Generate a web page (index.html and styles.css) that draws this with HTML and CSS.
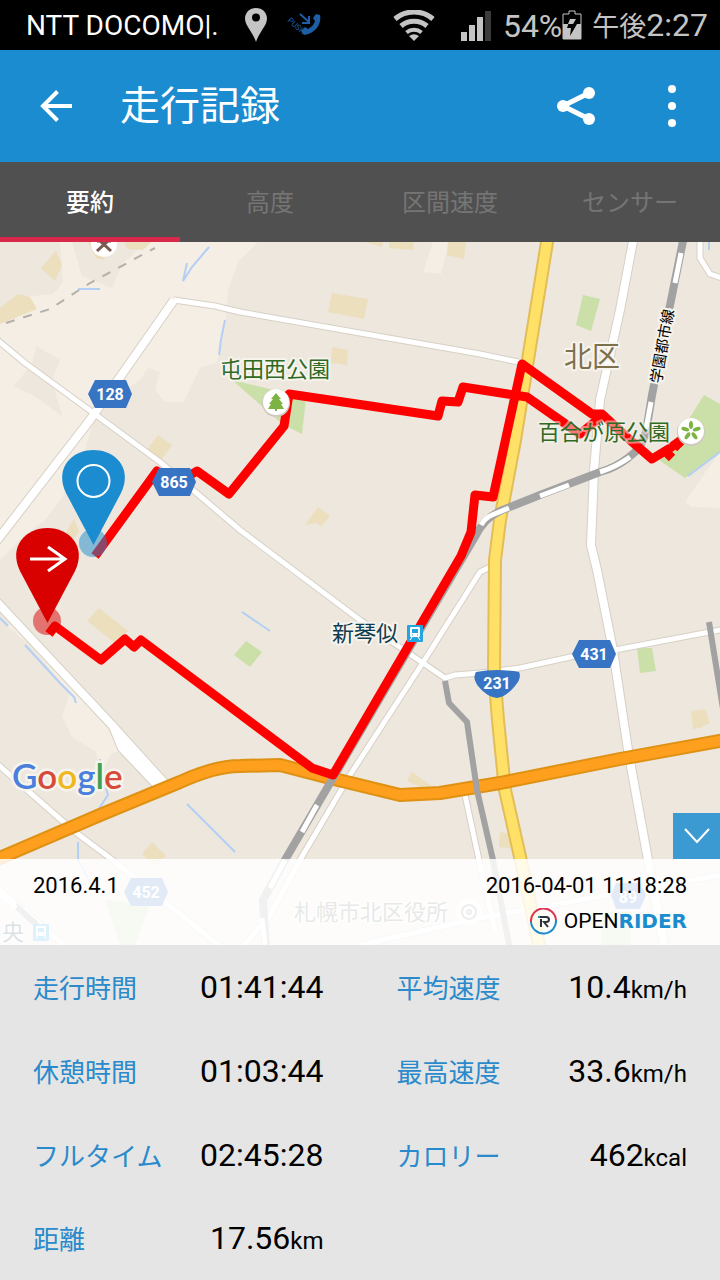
FILE: index.html
```html
<!DOCTYPE html>
<html lang="ja">
<head>
    <meta charset="UTF-8">
    <meta name="viewport" content="width=device-width, initial-scale=1.0">
    <title>走行記録 - OpenRider</title>
    <link rel="stylesheet" href="styles.css">
</head>
<body>
    <div class="status-bar">
        <span class="carrier">NTT DOCOMO|.</span>
        <svg class="status-pin" width="22" height="34" viewBox="0 0 22 34">
            <path fill="#c4c4c4" fill-rule="evenodd" d="M11 0C4.500 0 0 4.700 0 10.500 0 18 8 24 11 34 14 24 22 18 22 10.500 22 4.700 17.500 0 11 0zM11 5.500a4 4 0 1 1 0 8a4 4 0 1 1 0-8z"/>
        </svg>
        <svg class="status-call" width="34" height="24" viewBox="0 0 34 24">
            <text class="push" x="0" y="8" transform="rotate(42 0 8)">PUSH</text>
            <path d="M13 1l9 8M22 3v7h-7" fill="none" stroke="#1d5ea6" stroke-width="2"/>
            <path d="M29 1l4 1c2 9-5 19-16 20l-3-4 4-4 3 2c4-2 6-5 7-8l-2-3z" fill="#1d5ea6"/>
        </svg>
        <div class="status-right">
            <svg width="42" height="31" viewBox="0 0 42 31" fill="none" stroke="#c4c4c4" stroke-width="5">
                <path d="M2 9a29 29 0 0 1 38 0"/>
                <path d="M8 16a20 20 0 0 1 26 0"/>
                <path d="M13.500 22.500a12 12 0 0 1 15 0" stroke-width="4"/>
                <path d="M21 31l-5-5a8.500 8.500 0 0 1 10 0z" fill="#c4c4c4" stroke="none"/>
            </svg>
            <svg class="signal" width="30" height="31" viewBox="0 0 30 31" fill="#c4c4c4">
                <path d="M0 22h6v9H0zM8 15h6v16H8zM16 7h6v24h-6z"/>
                <path fill="#3c3c3c" d="M24 1h6v30h-6z"/>
            </svg>
            <span class="battery-level">54%</span>
            <svg width="20" height="30" viewBox="0 0 20 30">
                <path d="M1 4h6V1h6v3h6v25H1z" fill="none" stroke="#c4c4c4" stroke-width="1"/>
                <path d="M1 14h18v15H1z" fill="#c4c4c4"/>
                <path d="M8 9h6l-3 5h4L8 26l1-8H5z" fill="#000"/>
                <path d="M8 9h6l-3 5H6z" fill="#c4c4c4"/>
            </svg>
            <span class="clock"><span class="ampm">午後</span>2:27</span>
        </div>
    </div>

    <header class="app-bar">
        <button class="icon-btn" type="button" aria-label="戻る">
            <svg width="32" height="32" viewBox="0 0 32 32" fill="none" stroke="#fff" stroke-width="4">
                <path d="M32 16H3M17.500 1.500L3 16l14.500 14.500"/>
            </svg>
        </button>
        <h1>走行記録</h1>
        <button class="icon-btn" type="button" aria-label="共有">
            <svg width="38" height="38" viewBox="0 0 38 38" fill="#fff">
                <path d="M32 6L6 19l26 13" fill="none" stroke="#fff" stroke-width="5"/>
                <circle cx="6" cy="19" r="6"/>
                <circle cx="32" cy="6" r="6"/>
                <circle cx="32" cy="32" r="6"/>
            </svg>
        </button>
        <button class="icon-btn menu-btn" type="button" aria-label="メニュー">
            <svg width="16" height="42" viewBox="0 0 16 42" fill="#fff">
                <circle cx="8" cy="4" r="4"/>
                <circle cx="8" cy="21" r="4"/>
                <circle cx="8" cy="38" r="4"/>
            </svg>
        </button>
    </header>

    <nav class="tabs">
        <a href="#summary" class="active">要約</a>
        <a href="#altitude">高度</a>
        <a href="#split">区間速度</a>
        <a href="#sensor">センサー</a>
    </nav>

    <section class="map">
        <svg class="map-canvas" viewBox="0 242 720 703">
            <rect class="land" x="0" y="242" width="720" height="703"/>

            <!-- lighter open ground -->
            <g class="field">
                <path d="M0 242H258L238 262 228 290 225 330 217 362 200 368 187 395 183 402 165 402 155 390 160 372 148 368 140 380 110 400 95 415 85 450 78 470 60 500 45 520 25 535 0 560z"/>
                <path d="M433 242h16l-8 32-18-2z"/>
                <path d="M720 452l-20 28-15 22 6 5 29 1z"/>
                <path d="M5 625l25 20 40 48-8 24 10 20 24 15 5 22 10-20 15-5-20-25-35-50-50-50z"/>
            </g>
            <g class="land">
                <path d="M0 242h60l3 40-10 12-30 3-23 20z"/>
                <path d="M72 242h75l-25 22-10 24-30-12z"/>
                <path d="M36 346l24 14-8 20 10 36-28-20-20-10 18-22z"/>
            </g>
            <g class="block">
                <path d="M56 251l6 14-7 16-14-13zM18 294l12 3 7 12-37 15v-16zM88 242h20l-4 18-8-2zM125 242h26l-8 8-16-1z"/>
                <path d="M332 293l36 6-4 20-36-7zM332 347l16 3-1 15-16-2z"/>
                <path d="M365 242h18l-1 5zM389 242h25l-1 8-24-2zM448 242h18l-2 17-17-4z"/>
                <path d="M158 435l14 10-12 16-14-10zM74 519l5 12-8 12-6-9z"/>
                <path d="M318 507l12 9-9 11-4-4-12 2z"/>
                <path d="M99 608l29 23-13 12-28-22z"/>
                <path d="M412 772l20 14-12 1-13-6zM691 711l14-2 5 14-10 5-7 1z"/>
                <path d="M152 842l14 14-12 10-12-12zM500 832l12 2 3 15-16-2z"/>
            </g>
            <g class="park">
                <path d="M232 380l74 18-4 36-20-10z"/>
                <path d="M583 295l17 4-9 32-15-6z"/>
                <path d="M704 395l16 9v48l-35 26-26-18 20-25z"/>
                <path d="M246 641l16 11-12 15-16-12z"/>
                <path d="M637 648h15l4 23-16 2z"/>
                <path d="M105 900l45 5-15 40h-15z"/>
                <path d="M603 912h26l2 33h-30z"/>
            </g>
            <g class="water">
                <path d="M209 247l-17 20-9 14 4-18M78 289h22M225 320l-4 20-2 15"/>
                <path d="M0 618l8 8M25 645l35 38 14 14 2 6M187 804l48 48M242 612l28 19"/>
                <path d="M100 759v8l8 28-12 18M78 842v18l14 25M720 452l-32 24M709 242v8"/>
            </g>
            <path class="border-line" d="M6 323L50 309 90 283 155 248"/>

            <g class="road-casing">
                <path class="wide" d="M-5 543L90 420 174 300M-5 600L110 723 168 787M112 724l10 24 36 38"/>
                <path class="wide" d="M634 236L620 310 600 400 594 470 591 545 597 570 613 650 628 750 648 860 665 950"/>
                <path d="M174 300L215 306 240 312 480 354 528 364"/>
                <path d="M-5 338L25 363 92 412 160 462 240 530 360 620 445 678 455 675 480 673 520 668 575 656 620 649 725 629"/>
                <path d="M-5 762L75 832 110 858 225 950M494 565L480 572 422 664 350 775 300 860 270 915 240 950"/>
                <path d="M700 236v22l10 16 15 5M465 795l14 65 16 70M360 945l120-27 240-43M-5 886L70 950"/>
            </g>
            <g class="road">
                <path class="wide" d="M-5 543L90 420 174 300M-5 600L110 723 168 787M112 724l10 24 36 38"/>
                <path class="wide" d="M634 236L620 310 600 400 594 470 591 545 597 570 613 650 628 750 648 860 665 950"/>
                <path d="M174 300L215 306 240 312 480 354 528 364"/>
                <path d="M-5 338L25 363 92 412 160 462 240 530 360 620 445 678 455 675 480 673 520 668 575 656 620 649 725 629"/>
                <path d="M-5 762L75 832 110 858 225 950M494 565L480 572 422 664 350 775 300 860 270 915 240 950"/>
                <path d="M700 236v22l10 16 15 5M465 795l14 65 16 70M360 945l120-27 240-43M-5 886L70 950"/>
            </g>

            <path class="route-casing" d="M548 236L515 440 500 520 495 560 494 670 498 720 505 790 523 870 540 950"/>
            <path class="route-road" d="M548 236L515 440 500 520 495 560 494 670 498 720 505 790 523 870 540 950"/>
            <path class="highway-casing" d="M-5 860L100 815 180 782Q215 766 240 766L280 765 330 778 400 795 440 793 500 783 620 759 725 740"/>
            <path class="highway" d="M-5 860L100 815 180 782Q215 766 240 766L280 765 330 778 400 795 440 793 500 783 620 759 725 740"/>

            <!-- railways -->
            <path class="rail" d="M684 236L663 340 652 395 646 432Q642 448 628 458 615 468 600 472L540 495 500 511Q484 519 476 535L420 630 333 778 285 860 263 900 266 950"/>
            <path class="rail thin" d="M445 681L449 703 467 722 477 790 493 860 510 950M709 622L724 715M15 905l22 20"/>
            <path class="rail-dash" d="M681 253L675 283M651 402L646 429M630 457Q616 467 600 472M569 485L540 496M509 508L492 515Q485 518 481 525M317 805L302 832M285 860L270 888M262 918L265 945M0 893L16 908"/>

            <path class="track" d="M95 556L157 471 177 483 197 471 229 494 284 426 289 394 438 416 442 401 458 402 463 387 527 397 580 434 602 416M49 634L55 626 101 660 125 639 134 647 141 640 312 768 333 775 461 556 471 532 475 495 493 497 522 364 592 414 602 414 630 440 652 459 670 448 687 436M664 450l8 8M674 448l12-12"/>

            <g class="shield">
                <path d="M88 394l7-14h31l6 14-6 14H95zM152 482l7-14h31l6 14-6 14h-31zM572 654l7-14h31l6 14-6 14h-31zM124 892l7-14h31l6 14-6 14h-31z"/>
                <path d="M476 672q20-4 43 0 3 6-4 14-9 11-18 12-10-1-19-12-6-8-2-14z"/>
                <path d="M616 883h24l6 12-6 14h-24l-5-14z"/>
                <text x="110" y="400">128</text>
                <text x="174" y="488">865</text>
                <text x="594" y="660">431</text>
                <text x="497" y="689">231</text>
                <text x="146" y="898">452</text>
                <text x="628" y="903">89</text>
            </g>

            <!-- place markers -->
            <circle cx="104" cy="244" r="13" fill="#fff"/>
            <path d="M97 241h14M109 240l-12 11M99 240l12 11" fill="none" stroke="#7a5a50" stroke-width="3"/>
            <circle cx="276" cy="403" r="14" fill="#cfcac0"/>
            <circle cx="276" cy="402" r="13" fill="#fff"/>
            <path d="M276 393l5 6h-2l4 5h-2l3 5h-7v2h-2v-2h-7l3-5h-2l4-5h-2z" fill="#7cb342"/>
            <circle cx="691" cy="432" r="14" fill="#cfcac0"/>
            <circle cx="691" cy="431" r="13" fill="#fff"/>
            <g fill="#7cb342">
                <ellipse cx="691" cy="425" rx="2" ry="4"/>
                <ellipse cx="691" cy="425" rx="2" ry="4" transform="rotate(72 691 431)"/>
                <ellipse cx="691" cy="425" rx="2" ry="4" transform="rotate(144 691 431)"/>
                <ellipse cx="691" cy="425" rx="2" ry="4" transform="rotate(216 691 431)"/>
                <ellipse cx="691" cy="425" rx="2" ry="4" transform="rotate(288 691 431)"/>
            </g>
            <circle cx="469" cy="912" r="13" fill="#fff"/>
            <g fill="none" stroke="#8a8a8a" stroke-width="2">
                <circle cx="469" cy="912" r="7"/>
                <circle cx="469" cy="912" r="2"/>
            </g>
            <g id="station">
                <rect x="407" y="625" width="16" height="17" rx="1" fill="#25a5e0"/>
                <rect x="410" y="627" width="10" height="10" rx="1" fill="#fff"/>
                <rect x="412" y="629" width="6" height="4" fill="#25a5e0"/>
                <path d="M412 637l-2 3M418 637l2 3" fill="none" stroke="#fff"/>
                <path d="M412 635h1M417 635h1" fill="none" stroke="#25a5e0"/>
            </g>
            <use href="#station" x="-374" y="299"/>

            <g class="place">
                <text class="park-name" x="220" y="377">屯田西公園</text>
                <text class="park-name over-track" x="538" y="440">百合が原公園</text>
                <text class="ward" x="564" y="367">北区</text>
                <text class="station-name" x="332" y="641">新琴似</text>
                <text class="station-name" x="-20" y="940">中央</text>
                <text class="office" x="294" y="920">札幌市北区役所</text>
                <text class="line-name" x="661" y="384" transform="rotate(-80 661 384)">学園都市線</text>
            </g>
            <text class="google" x="12" y="789"><tspan fill="#4a80dc">G</tspan><tspan fill="#d64a3a">o</tspan><tspan fill="#efb81f">o</tspan><tspan fill="#4a80dc">g</tspan><tspan fill="#3da057">l</tspan><tspan fill="#d64a3a">e</tspan></text>

            <!-- start and goal pins -->
            <circle cx="93" cy="543" r="14" fill="#1b8cd0" fill-opacity=".5"/>
            <path d="M93.500 545L66 493C54 468 72 450 93.500 450S133 468 121 493z" fill="#1b8cd0"/>
            <circle cx="93.500" cy="481" r="16" fill="none" stroke="#fff" stroke-width="2"/>
            <circle cx="47" cy="621" r="14" fill="#d90000" fill-opacity=".5"/>
            <path d="M47.500 623L20 571C8 546 26 528 47.500 528S87 546 75 571z" fill="#d90000"/>
            <path d="M30 559h34M48 547l17 12-17 12" fill="none" stroke="#fff" stroke-width="3"/>
        </svg>

        <div class="map-footer">
            <button class="collapse-btn" type="button" aria-label="地図を広げる">
                <svg width="26" height="16" viewBox="0 0 26 16" fill="none" stroke="#fff" stroke-width="2">
                    <path d="M1 1l12 13L25 1"/>
                </svg>
            </button>
            <div class="ride-info">
                <span class="ride-name">2016.4.1</span>
                <div class="ride-meta">
                    <time datetime="2016-04-01T11:18:28">2016-04-01 11:18:28</time>
                    <div class="brand">
                        <svg width="27" height="27" viewBox="0 0 27 27" fill="none" stroke-width="2">
                            <path d="M1 14a12.500 12.500 0 0 1 25-2" stroke="#dc3553"/>
                            <path d="M26 12a12.500 12.500 0 1 1-25 2" stroke="#1b8cd0"/>
                            <path d="M8 9h3" stroke="#1b8cd0"/>
                            <path d="M10 9h6q3 0 3 2.500T16 14h-2l4 5M11 11v8" stroke="#2b3238"/>
                        </svg>
                        <span class="brand-name">OPEN<b>RIDER</b></span>
                    </div>
                </div>
            </div>
        </div>
    </section>

    <dl class="stats" id="summary">
        <div><dt>走行時間</dt><dd>01:41:44</dd></div>
        <div><dt>平均速度</dt><dd>10.4<small>km/h</small></dd></div>
        <div><dt>休憩時間</dt><dd>01:03:44</dd></div>
        <div><dt>最高速度</dt><dd>33.6<small>km/h</small></dd></div>
        <div><dt>フルタイム</dt><dd>02:45:28</dd></div>
        <div><dt>カロリー</dt><dd>462<small>kcal</small></dd></div>
        <div><dt>距離</dt><dd>17.56<small>km</small></dd></div>
    </dl>
</body>
</html>
```

FILE: styles.css
```css
* {
    box-sizing: border-box;
}

body {
    margin: 0;
    min-height: 100vh;
    display: flex;
    flex-direction: column;
    font-family: Roboto, "Noto Sans CJK JP", sans-serif;
    background: #e5e5e5;
    color: #000;
}

svg {
    display: block;
    flex: none;
}

/* Status bar */
.status-bar {
    display: flex;
    align-items: center;
    height: 50px;
    padding: 0 12px 0 26px;
    background: #000;
    color: #c4c4c4;
    white-space: nowrap;
}

.carrier {
    font-size: 28px;
    line-height: 50px;
    padding-top: 2px;
    color: #fff;
}

.status-pin {
    margin-left: 26px;
}

.status-call {
    margin-left: 20px;
}

.push {
    font-size: 8px;
    fill: #1d5ea6;
}

.status-right {
    display: flex;
    align-items: center;
    margin-left: auto;
}

.signal {
    margin: 0 12px 0 26px;
}

.battery-level,
.clock {
    font-size: 32px;
    line-height: 50px;
}

.battery-level {
    padding-top: 2px;
}

.clock {
    margin-left: 10px;
    padding-top: 2px;
}

.ampm {
    font-size: 27px;
}

/* App bar */
.app-bar {
    display: flex;
    align-items: center;
    height: 112px;
    padding: 0 40px;
    background: #1b8cd0;
    color: #fff;
}

.app-bar h1 {
    flex: 1;
    margin: 0 0 0 48px;
    padding-top: 2px;
    font-size: 40px;
    line-height: 56px;
    font-weight: 400;
}

.icon-btn {
    padding: 0;
    border: none;
    background: none;
    cursor: pointer;
}

.menu-btn {
    margin-left: 69px;
}

/* Tabs */
.tabs {
    display: flex;
    height: 80px;
    background: #505050;
}

.tabs a {
    flex: 1;
    padding-top: 5px;
    border-bottom: 5px solid transparent;
    font-size: 24px;
    line-height: 72px;
    text-align: center;
    text-decoration: none;
    color: #757575;
}

.tabs .active {
    border-color: #d9294b;
    color: #fff;
    font-weight: 500;
}

/* Map */
.map {
    position: relative;
}

.map-canvas {
    width: 100%;
    height: auto;
}

.land {
    fill: #ede7dd;
}

.field {
    fill: #f4eee4;
}

.block {
    fill: #ecdfbd;
}

.park {
    fill: #cbdfa9;
}

.water {
    fill: none;
    stroke: #b3cff5;
    stroke-width: 2;
}

.border-line {
    fill: none;
    stroke: #b3b0aa;
    stroke-width: 2;
    stroke-dasharray: 9 9;
}

.road,
.road-casing {
    fill: none;
    stroke: #fff;
    stroke-width: 5;
    stroke-linejoin: round;
}

.road .wide {
    stroke-width: 8;
}

.road-casing {
    stroke: #d6d0c5;
    stroke-width: 7;
}

.road-casing .wide {
    stroke-width: 10;
}

.route-road,
.route-casing,
.highway,
.highway-casing {
    fill: none;
    stroke: #ffe168;
    stroke-width: 10;
    stroke-linejoin: round;
}

.route-casing {
    stroke: #e2bd58;
    stroke-width: 14;
}

.highway {
    stroke: #ff9f1e;
}

.highway-casing {
    stroke: #df9114;
    stroke-width: 14;
}

.rail {
    fill: none;
    stroke: #a2a2a2;
    stroke-width: 8;
}

.rail.thin {
    stroke-width: 6;
    stroke-linejoin: round;
}

.rail-dash {
    fill: none;
    stroke: #fff;
    stroke-width: 5;
}

.track {
    fill: none;
    stroke: #f00;
    stroke-width: 9;
    stroke-linejoin: round;
}

.shield {
    fill: #3874c4;
}

.shield text {
    fill: #fff;
    font-size: 16px;
    font-weight: 700;
    text-anchor: middle;
}

.place text {
    stroke: #f7f4ee;
    stroke-width: 4;
    stroke-linejoin: round;
    paint-order: stroke;
}

.place .park-name {
    font-size: 22px;
    fill: #2f6b24;
}

.place .over-track {
    stroke-opacity: .5;
}

.place .ward {
    font-size: 28px;
    fill: #7d704c;
}

.place .station-name {
    font-size: 22px;
    fill: #103d50;
}

.place .office {
    font-size: 22px;
    fill: #666;
}

.place .line-name {
    font-size: 15px;
    fill: #000;
}

.google {
    font-family: Lato, sans-serif;
    font-size: 35px;
    font-weight: 600;
    stroke: #f7f4ee;
    stroke-width: 5;
    stroke-linejoin: round;
    paint-order: stroke;
}

/* Ride name and date over the bottom of the map */
.map-footer {
    position: absolute;
    left: 0;
    right: 0;
    bottom: 0;
}

.collapse-btn {
    display: flex;
    align-items: center;
    justify-content: center;
    width: 47px;
    height: 46px;
    margin-left: auto;
    padding: 0;
    border: none;
    background: rgba(27, 140, 208, 0.85);
    cursor: pointer;
}

.ride-info {
    display: flex;
    justify-content: space-between;
    height: 86px;
    padding: 12px 33px 0;
    background: rgba(255, 255, 255, 0.85);
    font-size: 22px;
    line-height: 30px;
}

.ride-meta {
    text-align: right;
}

.brand {
    display: flex;
    align-items: center;
    justify-content: flex-end;
    gap: 7px;
    height: 40px;
    font-size: 21px;
}

.brand-name b {
    font-family: "DejaVu Sans", sans-serif;
    font-size: 20px;
    font-weight: 700;
    color: #1b8cd0;
}

/* Ride totals */
.stats {
    flex: 1;
    display: grid;
    grid-template-columns: 1fr 1fr;
    grid-auto-rows: 1fr;
    column-gap: 73px;
    margin: 0;
    padding: 0 33px;
}

.stats div {
    display: flex;
    align-items: baseline;
    justify-content: space-between;
    padding-top: 22px;
}

.stats dt {
    font-size: 26px;
    line-height: 40px;
    color: #2a8acb;
}

.stats dd {
    margin: 0;
    font-size: 32px;
    line-height: 40px;
}

.stats small {
    font-size: 24px;
}
```
